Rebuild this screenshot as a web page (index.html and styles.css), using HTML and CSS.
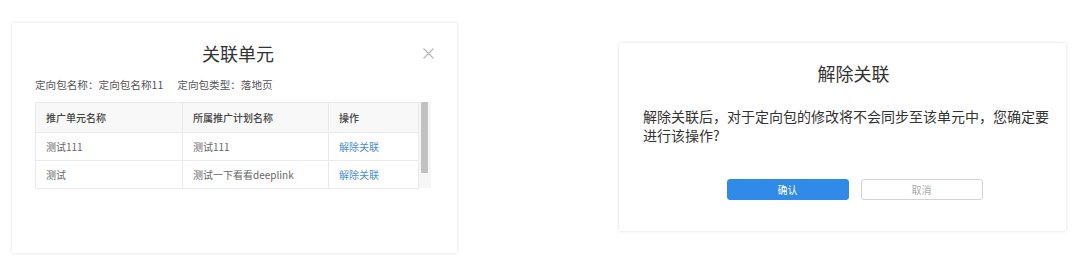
FILE: index.html
```html
<!DOCTYPE html>
<html lang="zh-CN">
<head>
<meta charset="utf-8">
<link rel="stylesheet" href="styles.css">
</head>
<body>
<div class="page">
  <section class="dialog dialog-assoc">
    <h2 class="dialog-title title-assoc">关联单元</h2>
    <button class="close" aria-label="关闭">
      <svg width="11" height="11" viewBox="0 0 11 11"><path d="M0.5 0.5 L10.5 10.5 M10.5 0.5 L0.5 10.5" stroke="#b8b8b8" stroke-width="1.2" fill="none"/></svg>
    </button>
    <p class="info"><span>定向包名称：定向包名称11</span><span>定向包类型：落地页</span></p>
    <div class="table-wrap">
      <table class="table">
        <colgroup><col class="c1"><col class="c2"><col class="c3"></colgroup>
        <thead>
          <tr><th>推广单元名称</th><th>所属推广计划名称</th><th>操作</th></tr>
        </thead>
        <tbody>
          <tr><td>测试111</td><td>测试111</td><td><a class="link">解除关联</a></td></tr>
          <tr><td>测试</td><td>测试一下看看deeplink</td><td><a class="link">解除关联</a></td></tr>
        </tbody>
      </table>
      <div class="scrollbar"><div class="thumb"></div></div>
    </div>
  </section>

  <section class="dialog dialog-confirm">
    <h2 class="dialog-title title-confirm">解除关联</h2>
    <p class="message">解除关联后，对于定向包的修改将不会同步至该单元中，您确定要进行该操作?</p>
    <div class="actions">
      <button class="btn btn-primary">确认</button>
      <button class="btn btn-default">取消</button>
    </div>
  </section>
</div>
</body>
</html>
```

FILE: styles.css
```css
* { box-sizing: border-box; }
html, body { margin: 0; padding: 0; background: #fff; }
body {
  font-family: "Noto Sans CJK SC", "Noto Sans", "Liberation Sans", sans-serif;
  color: #333;
  width: 1088px;
  height: 278px;
  overflow: hidden;
}
.page {
  display: flex;
  align-items: flex-start;
  padding: 23px 0 0 12px;
  gap: 162px;
}
.dialog {
  position: relative;
  background: #fff;
  box-shadow: 0 0 3px rgba(0,0,0,0.14);
}
.dialog-assoc {
  width: 445px;
  height: 230px;
  padding: 18px 0 0 23px;
}
.dialog-confirm {
  width: 447px;
  height: 188px;
  margin-top: 20px;
  padding: 18px 0 0 24px;
}
.dialog-title {
  margin: 0;
  font-size: 18px;
  line-height: 24px;
  font-weight: 400;
  color: #333;
  text-align: center;
}
.title-assoc { padding-right: 16px; }
.title-confirm { padding-right: 2px; }
.close {
  position: absolute;
  top: 25px;
  right: 23px;
  padding: 0;
  border: 0;
  background: none;
  width: 11px;
  height: 11px;
  line-height: 0;
}
.info {
  margin: 12px 0 0;
  font-size: 10.6px;
  line-height: 16px;
  color: #555;
  display: flex;
  gap: 14px;
}
.table-wrap {
  margin-top: 9px;
  display: flex;
  width: 395px;
}
.table {
  border-collapse: collapse;
  table-layout: fixed;
  width: 383px;
  font-size: 10px;
  border: 1px solid #e8eaec;
}
.c1 { width: 147px; }
.c2 { width: 146px; }
.c3 { width: 90px; }
.table th, .table td {
  text-align: left;
  padding: 0 0 0 10px;
  border-right: 1px solid #e8eaec;
  border-bottom: 1px solid #e8eaec;
  white-space: nowrap;
}
.table th {
  height: 30px;
  background: #f8f8f9;
  font-weight: 500;
  color: #444;
}
.table td {
  height: 28px;
  color: #666;
}
.link { color: #4b8fd6; }
.scrollbar {
  width: 12px;
  height: 86px;
  background: #f6f6f6;
  padding: 0 3px 0 2px;
}
.thumb {
  width: 7px;
  height: 71px;
  background: #c1c1c1;
  border-radius: 1px;
}
.message {
  margin: 22px 0 0;
  width: 412px;
  font-size: 14px;
  line-height: 19px;
  color: #333;
}
.actions {
  margin-top: 34px;
  display: flex;
  justify-content: center;
  gap: 12px;
}
.btn {
  width: 122px;
  height: 21px;
  border-radius: 3px;
  font-family: inherit;
  font-size: 10px;
  padding: 0;
  line-height: 19px;
}
.btn-primary {
  background: #2f8ae8;
  border: 1px solid #2f8ae8;
  color: #fff;
}
.btn-default {
  background: #fff;
  border: 1px solid #d4d4d4;
  color: #aaa;
}
```
